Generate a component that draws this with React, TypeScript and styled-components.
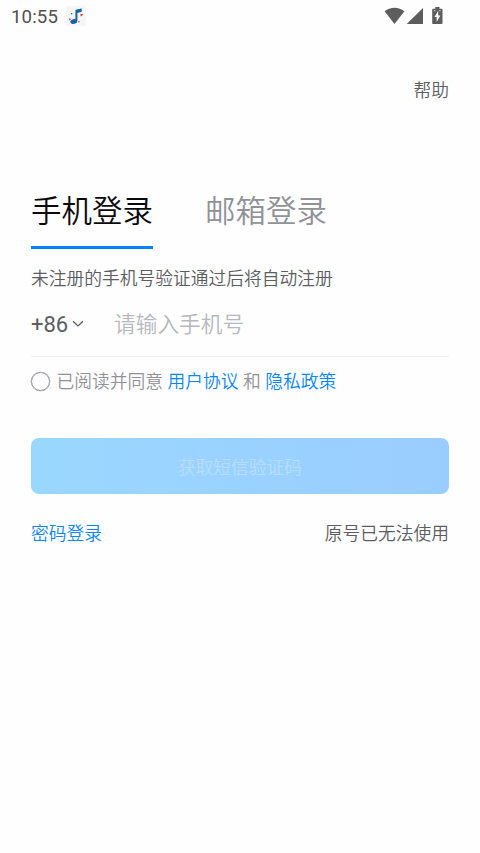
import React from "react";
import styled, { createGlobalStyle } from "styled-components";

const GlobalStyle = createGlobalStyle`
  * { box-sizing: border-box; }
  body {
    margin: 0;
    background: #fefefe;
    font-family: Roboto, "Noto Sans CJK SC", sans-serif;
    font-weight: 350;
  }
  button, input { font: inherit; border: 0; padding: 0; background: none; }
`;

const Screen = styled.div`
  width: 480px;
  height: 853px;
  background: #fefefe;
  color: #5b5d62;
  font-size: 17.75px;
  overflow: hidden;
`;

const StatusBar = styled.header`
  display: flex;
  align-items: center;
  justify-content: space-between;
  height: 32px;
  padding: 0 36px 0 11px;
`;

const StatusGroup = styled.div`
  display: flex;
  align-items: center;
`;

const Clock = styled.span`
  width: 55px;
  padding-top: 1px;
  font-size: 18.6px;
  line-height: 32px;
  font-weight: 400;
  letter-spacing: 0.15px;
  color: #505050;
`;

const Content = styled.main`
  padding: 44px 31px 0;
`;

const HelpRow = styled.div`
  display: flex;
  justify-content: flex-end;
  height: 30px;
`;

const TextButton = styled.button<{ $accent?: boolean }>`
  color: ${(p) => (p.$accent ? "#0a86fb" : "#5b5d62")};
  line-height: 30px;
  white-space: nowrap;
`;

const Tabs = styled.nav`
  display: flex;
  gap: 52px;
  margin-top: 78px;
`;

const Tab = styled.button<{ $active?: boolean }>`
  height: 65px;
  padding-bottom: 6px;
  font-size: 30.5px;
  line-height: 56px;
  color: ${(p) => (p.$active ? "#0a0a0a" : "#909298")};
  border-bottom: 3px solid ${(p) => (p.$active ? "#0583ff" : "transparent")};
`;

const Tip = styled.p`
  margin: 15px 0 0;
  line-height: 30px;
  white-space: nowrap;
`;

const PhoneRow = styled.div`
  display: flex;
  align-items: flex-start;
  height: 63px;
  border-bottom: 1px solid #f0f0f1;
`;

const CountryCode = styled.button`
  display: flex;
  align-items: center;
  gap: 4px;
  width: 83px;
  height: 62px;
  font-size: 22px;
  font-weight: 400;
  line-height: 62px;
  color: #5b5d62;
`;

const PhoneInput = styled.input`
  flex: 1;
  min-width: 0;
  height: 60px;
  font-size: 21.7px;
  outline: none;
  &::placeholder { color: #b6b8bd; opacity: 1; }
`;

const Agreement = styled.div`
  display: flex;
  align-items: center;
  margin-top: 10px;
  height: 30px;
  line-height: 30px;
  color: #909298;
  white-space: pre;
`;

const Radio = styled.span`
  width: 19px;
  height: 19px;
  margin: 0 6.5px 1px 0;
  border: 1.5px solid #96989d;
  border-radius: 50%;
  box-shadow: 0 0 0 0.3px #96989d;
`;

const Link = styled.a`
  color: #0a86fb;
  margin: 0 4.5px;
`;

const Submit = styled.button`
  display: block;
  width: 100%;
  height: 56px;
  margin-top: 41px;
  padding-top: 4px;
  border-radius: 8px;
  background: linear-gradient(90deg, #9ad7ff, #9acdff);
  color: #b8deff;
  line-height: 52px;
`;

const Footer = styled.footer`
  display: flex;
  justify-content: space-between;
  margin-top: 25px;
`;

const MusicIcon = () => (
  <svg width="20" height="20" viewBox="0 0 20 20">
    <rect width="20" height="20" rx="1.5" fill="#f6f6f6" />
    <path d="M9.500 3.800 15.700 2.600v3.200l-4.300 1.300v7.700H9.300z" fill="#1763a9" />
    <ellipse cx="7.800" cy="15.500" rx="3.500" ry="2.400" fill="#1763a9" transform="rotate(-12 7.800 15.500)" />
    <path d="m14.500 7.700 3 .9-2.800 1.900zM3 12.300l2.300.6-1.800 1.500z" fill="#e5293c" />
    <circle cx="5.700" cy="7.800" r="0.800" fill="#1763a9" />
    <circle cx="12.900" cy="15.800" r="0.800" fill="#e5293c" />
  </svg>
);

const SignalIcons = () => (
  <svg width="60" height="20" viewBox="0 0 60 20" fill="#5d5d5d">
    <path d="M.6 5.300C6.200.4 14.800.4 20.400 5.300L10.500 18z" />
    <path d="M39 2v16H22.700z" />
    <path d="M49 2.700h2.300V1h4.200v1.700h2.200c.5 0 .8.300.8.800v13.700c0 .5-.3.800-.8.800H49c-.5 0-.8-.3-.8-.8V3.500c0-.5.3-.8.800-.8z" />
    <path d="M54.200 4.800 50.500 11h2.200v5l3.700-6.400h-2.200z" fill="#fefefe" />
    <path d="M50 4.700h1.500M55.200 4.700h1.500" stroke="#fefefe" strokeWidth="0.8" />
  </svg>
);

const ChevronIcon = styled.svg`
  margin-bottom: 3px;
`;

const Chevron = () => (
  <ChevronIcon width="12" height="8" viewBox="0 0 12 8" fill="none" stroke="#5b5d62" strokeWidth="1.400">
    <path d="m1 1.200 5 4.700 5-4.700" />
  </ChevronIcon>
);

export default function App() {
  return (
    <>
      <GlobalStyle />
      <Screen>
        <StatusBar>
          <StatusGroup>
            <Clock>10:55</Clock>
            <MusicIcon />
          </StatusGroup>
          <SignalIcons />
        </StatusBar>
        <Content>
          <HelpRow>
            <TextButton>帮助</TextButton>
          </HelpRow>
          <Tabs>
            <Tab $active>手机登录</Tab>
            <Tab>邮箱登录</Tab>
          </Tabs>
          <Tip>未注册的手机号验证通过后将自动注册</Tip>
          <PhoneRow>
            <CountryCode>
              +86
              <Chevron />
            </CountryCode>
            <PhoneInput placeholder="请输入手机号" />
          </PhoneRow>
          <Agreement>
            <Radio />
            已阅读并同意<Link>用户协议</Link>和<Link>隐私政策</Link>
          </Agreement>
          <Submit>获取短信验证码</Submit>
          <Footer>
            <TextButton $accent>密码登录</TextButton>
            <TextButton>原号已无法使用</TextButton>
          </Footer>
        </Content>
      </Screen>
    </>
  );
}
